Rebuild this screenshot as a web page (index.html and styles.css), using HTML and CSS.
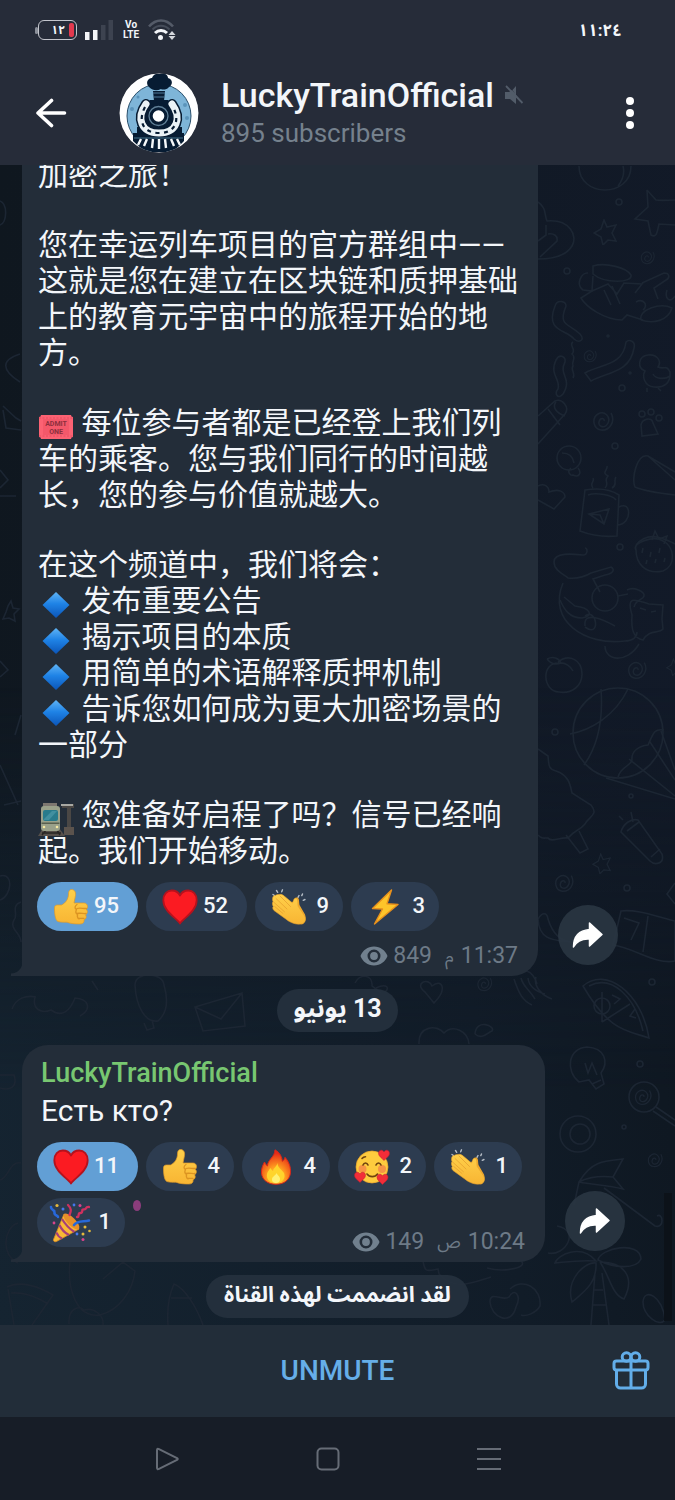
FILE: index.html
```html
<!DOCTYPE html>
<html lang="en">
<head>
<meta charset="utf-8">
<meta name="viewport" content="width=device-width, initial-scale=1">
<title>LuckyTrainOfficial</title>
<link rel="stylesheet" href="styles.css">
</head>
<body>
<svg class="sprite" aria-hidden="true">
  <defs>
    <linearGradient id="blue" x1="0" y1="0" x2="0" y2="1"><stop offset="0" stop-color="#5fb4f6"/><stop offset=".45" stop-color="#1f83e6"/><stop offset="1" stop-color="#0b55b8"/></linearGradient>
    <linearGradient id="skin" x1="0" y1="0" x2="0" y2="1"><stop offset="0" stop-color="#ffd04a"/><stop offset="1" stop-color="#f8b533"/></linearGradient>
    <radialGradient id="flame" cx=".5" cy=".8" r=".7"><stop offset="0" stop-color="#ffd93b"/><stop offset=".45" stop-color="#ff9a1f"/><stop offset="1" stop-color="#e62a17"/></radialGradient>
    <symbol id="e-thumb" viewBox="0 0 36 36">
      <path fill="url(#skin)" stroke="#e09a26" stroke-width=".7" d="M1.5 19c0-2 1-3 3-3h4c4-2 7-6 7-11 0-3 1-4.500 3-4.500 3 0 4.500 2.500 4 6l-1.500 7.500h10c2 0 3.500 1.500 3.500 3.500 0 1.500-.5 2.300-1.400 2.900 1 .6 1.500 1.600 1.200 3-.2 1.200-.9 2-1.800 2.400.6.7.9 1.600.6 2.800-.3 1.200-1.100 1.900-2.200 2.200.3.700.3 1.400 0 2-.6 1.500-1.800 2.200-4 2.200-5 0-9-.3-13-1.800-3 0-6 .3-9-.7C2 31 1.500 24 1.500 19z"/>
      <path fill="none" stroke="#dc9422" stroke-width="1.300" stroke-linecap="round" d="M24 19.500c3-1 6 .2 9.500 0M24 24.500c3-.7 6 .3 9 0M25 29.300c2 0 4 .3 6 0M24 15.500c-2.500 1.500-2.500 4-.5 5-1 2-.7 4 1 5-.5 2 0 3.600 1.500 4.500"/>
    </symbol>
    <symbol id="e-heart" viewBox="0 0 36 36"><path fill="#fb1b22" stroke="#b5121d" stroke-width="1.800" stroke-linejoin="round" d="M18 34.500C15 29.500 1.300 22.500 1.300 11.200 1.300 5.500 5 1.500 9.800 1.500c3.700 0 6.700 2 8.200 5 1.500-3 4.500-5 8.200-5 4.800 0 8.500 4 8.500 9.700C34.700 22.500 21 29.500 18 34.500z"/></symbol>
    <symbol id="e-clap" viewBox="0 0 36 36">
      <g fill="none" stroke="#b5bcc5" stroke-width="1.400" stroke-linecap="round"><path d="M2 5.500l1.500 1M5.500 1.500l1.200 1.800M11.500.8l-.8 2M28 6.500l-1 1.800M31.500 5l-.7 1.600M34 10.500l-1.800.8"/></g>
      <path fill="#f0a92c" d="M18 15l5-3c1-3 1.500-4 3.200-3.500 2.300.6 1.700 4.500 2.300 7.500l5.500 9.500c1 2 .5 8-2 9.500-4 1.500-11-3-14-7z"/>
      <path fill="url(#skin)" stroke="#e4a02c" stroke-width=".6" d="M2 12.500C1 10.500 1.500 6.500 4 6.500c1 0 1.500-1.500 4-1 2-.5 3.500 0 5.500 1.800L21.500 14c1.200-2 1-5 3.200-4.800 3 .4 1.600 5 2.600 8.300l6 9c2 3 1.500 6.500-1.500 8-6 2-13-1-17-4.500L3 21.500c-1.500-1.500-1.500-3.500-.7-4C1.500 16.500 1 14 2 12.500z"/>
      <path fill="none" stroke="#e9a531" stroke-width=".9" stroke-linecap="round" d="M5 9.500l11 10.500M9 7l10.500 10.500M3.700 17.500L12 24.500M2.500 13l11 9.800"/>
    </symbol>
    <symbol id="e-bolt" viewBox="0 0 36 36"><path fill="#fdc52a" stroke="#e8901c" stroke-width="1.400" stroke-linejoin="round" d="M24.500 1L5.500 19.500l10 .5-8 15L31 15.500l-11-.8z"/></symbol>
    <symbol id="e-fire" viewBox="0 0 36 36">
      <path fill="url(#flame)" stroke="#d9261a" stroke-width="1" d="M17 .8c5 3 7 7 7.300 11.500 1.500-.8 2.300-2.300 2.700-4 4 4.500 6 10 5.500 15.500C31.700 31 26 35.300 18 35.300S4 31 3.500 24c-.3-5 1.500-8 3-11 .8 1.500 1.500 3 3 4C9.500 10.500 17 8 17 .8z"/>
      <path fill="#ffd42c" d="M19.500 14c0 5 5 7 6.500 10 2 5.500-1.500 10-8 10s-10-4-9-9c.7-3 2.300-4 3.500-6 .8 1.500 1.500 2.300 2.600 3 0-3 3.500-4 4.400-8z"/><path fill="#fff176" d="M18.500 24c.5 2 3.500 3 3.500 6 0 2.500-1.500 4-4 4s-4.300-1.500-4-4c.3-2.500 3.700-3.500 4.500-6z"/>
    </symbol>
    <path id="mini" fill="#f22d38" stroke="#be1d30" stroke-width=".5" d="M0 5.500C-2 3-5.500 1.500-5.500-1.800-5.500-5-1.500-6 0-3 1.500-6 5.500-5 5.500-1.800 5.500 1.500 2 3 0 5.500z"/>
    <symbol id="e-love" viewBox="0 0 36 36">
      <circle cx="18" cy="18" r="16" fill="#fecb3e" stroke="#eca52c" stroke-width=".7"/>
      <circle cx="8.500" cy="20" r="4" fill="#f79445"/><circle cx="28" cy="20" r="4" fill="#f79445"/>
      <g fill="none" stroke="#70430f" stroke-width="1.600" stroke-linecap="round"><path d="M9 16c1-2.700 4-2.700 5 0M22 16c1-2.700 4-2.700 5 0M13 25c2.500 3.500 8 3.500 10.500 0M8 9.500c1-1.200 2-1.700 3.500-1.800"/></g>
      <use href="#mini" x="30" y="6"/><use href="#mini" x="6" y="28"/><use href="#mini" x="28.500" y="30"/>
    </symbol>
    <symbol id="e-party" viewBox="0 0 42 40">
      <path fill="#f9b935" stroke="#d78a24" stroke-width=".8" d="M4.500 36.500L15 11c5 2 12 9 15 15L7.500 38.500c-2 .8-3.500-.3-3-2z"/>
      <path fill="none" stroke="#a63f7a" stroke-width="2.200" d="M13 16c3 5 7 9.500 12.500 13M10.500 22c2 4.500 5.500 8 9.500 10M7.500 29.500c1 3 3 5 5.500 6"/>
      <ellipse cx="22.500" cy="18.500" rx="4" ry="10.500" transform="rotate(-45 22.500 18.500)" fill="#e88f2a"/>
      <path fill="none" stroke="#2768da" stroke-width="2.600" stroke-linecap="round" d="M2 4c0 4 4 2 3.500 5.500S9 12 9 14M25 22c4-5 9-3 15-4.500"/>
      <path fill="none" stroke="#ce315f" stroke-width="2.300" stroke-linecap="round" d="M19 2c4 4 3 6 1.500 10M28 14c3 .5 0-4 3.500-4s0-4 3.500-3.700S35.500 3.500 40 4"/>
      <g fill="#e6b93b"><circle cx="8" cy="2.500" r="1.600"/><circle cx="36" cy="24" r="1.500"/><circle cx="40.500" cy="28" r="1.300"/><circle cx="34" cy="31" r="1.500"/></g>
      <g fill="#d8438c"><circle cx="31" cy="2.500" r="1.500"/><circle cx="5" cy="20" r="1.400"/><circle cx="34" cy="36.500" r="1.500"/></g><g fill="#4577ed"><circle cx="14" cy="6" r="1.500"/><circle cx="25" cy="2" r="1.400"/><circle cx="28" cy="31" r="1.400"/></g>
    </symbol>
    <symbol id="e-diamond" viewBox="0 0 36 36"><path d="M18 5l13.500 13L18 31 4.500 18z" fill="url(#blue)"/></symbol>
    <symbol id="e-ticket" viewBox="0 0 36 36">
      <path d="M3 6h30q0 2 2 2v20q-2 0-2 2H3q0-2-2-2V8q2 0 2-2z" fill="#fb6273"/><path d="M1 9h34M1 27h34" stroke="#e84c60" stroke-dasharray="2 1.500"/><rect x="5" y="10" width="26" height="16" fill="#f4586a"/>
      <text x="18" y="17" text-anchor="middle" class="ticket-text">ADMIT</text><text x="18" y="25" text-anchor="middle" class="ticket-text">ONE</text>
    </symbol>
    <symbol id="e-station" viewBox="0 0 36 36">
      <path fill="#4a4745" d="M24 3h12v4h-3v20h-4V7h-5z"/><path fill="#a8a8a3" d="M23 3h12v2H23z"/><path fill="#5b534d" d="M26 26h10v8H26z"/><path fill="#57504b" d="M0 35l5-8h16l6 8z"/><path stroke="#292625" stroke-width="1.500" d="M4 34l4-5M22 34l-3-5M4 32h19"/>
      <path fill="#7d7770" d="M5 2h14v4H5z"/><rect x="3" y="5" width="19" height="25" rx="3" fill="#9aa18a"/><rect x="5" y="9" width="15" height="11" rx="2" fill="#287b8c"/><path d="M6 18l8-8h5l-8 9H6z" fill="#4190a0"/><path fill="#59604f" d="M3.500 21.500h18v1.500h-18z"/><circle cx="6" cy="26" r="1.300" fill="#f6e9a2"/><circle cx="19" cy="26" r="1.300" fill="#f6e9a2"/>
    </symbol>
    <symbol id="i-eye" viewBox="0 0 28 20"><path fill="#71808e" fill-rule="evenodd" d="M14 0.500C7.700.5 2.500 4.500.5 10c2 5.500 7.200 9.500 13.500 9.500S25.500 15.500 27.500 10C25.500 4.500 20.300.5 14 .5zm0 16A6.500 6.500 0 1 1 14 3.500a6.500 6.500 0 0 1 0 13zm0-2.600a3.900 3.900 0 1 0 0-7.800 3.900 3.900 0 0 0 0 7.800z"/></symbol>
    <symbol id="i-share" viewBox="0 0 32 28"><path fill="#fff" stroke="#fff" stroke-width="1.500" stroke-linejoin="round" d="M17.500 2L30 13.500 17.500 25v-7C10 17.500 5 19.500 1.500 26 1.500 16 7 9.500 17.500 8.500z"/></symbol>
    <symbol id="spiral" viewBox="0 0 22 22"><path d="M19 3c5 9-2 18-10 17S-.5 8 6 4s13 3 10 9-10 4-9-1 6-4 5-1"/></symbol>
    <symbol id="star" viewBox="0 0 24 26"><path d="M11 1l3 7 9-2-4 8 4 8-8-1-5 5-2-8-7-4 7-4z"/></symbol>
  </defs>
</svg>

<div class="screen">
  <header class="header">
    <div class="status">
      <div class="status-icons">
        <span class="battery"><span>١٢</span><i></i></span>
        <svg class="signal" viewBox="0 0 28 20" aria-hidden="true"><path fill="#f3f5f8" d="M0 12h4.500v8H0zM8 10h4.500v10H8z"/><path fill="#3d4350" d="M16 5h4.500v15H16zM23.500 0H28v20h-4.500z"/></svg>
        <span class="volte"><span>Vo</span><span>LTE</span></span>
        <svg class="wifi" viewBox="0 0 28 22" fill="none" aria-hidden="true"><path stroke="#545b68" stroke-width="2.600" d="M1 7.500C8-.5 18-.5 25 7.500"/><path stroke="#454c59" stroke-width="2" d="M4.500 10.500c5-5 12-5 17 0"/><path stroke="#f3f5f8" stroke-width="3" d="M7 14c3.500-3.500 8.500-3.500 12 0"/><circle cx="12.500" cy="18.500" r="2.500" fill="#f3f5f8"/><path fill="#d4d7dc" d="M24 12l3.500 4h-7zM24 21l3.500-4h-7z"/></svg>
      </div>
      <time class="clock">١١:٢٤</time>
    </div>
    <div class="toolbar">
      <button class="icon-btn back" aria-label="Back"><svg viewBox="0 0 32 30" fill="none" stroke="#fff" stroke-width="3.600" stroke-linecap="round" stroke-linejoin="round"><path d="M16.500 2.500L3 15l13.500 12.500M3 15h26.500"/></svg></button>
      <svg class="avatar" viewBox="0 0 80 80" role="img" aria-label="LuckyTrainOfficial">
        <clipPath id="round"><circle cx="40" cy="40" r="39.500"/></clipPath>
        <g clip-path="url(#round)"><circle cx="40" cy="40" r="40" fill="#fff"/><circle cx="40" cy="43" r="32" fill="#7eb5d8" stroke="#2a4f6b"/>
        <g fill="#5b94bb"><circle cx="13" cy="36" r="2"/><circle cx="66" cy="32" r="2"/><circle cx="19" cy="24" r="1.500"/><circle cx="68" cy="45" r="2"/></g>
        <path fill="#071c33" d="M30 14c-4-4-1-9 3-9 1-4 5-5 8-4 4-2 8 1 8 4 5 1 5 7 1 9-2 3-7 3-8 2-4 2-8 2-12-2zM34 18h12l-1 10H35z"/><path stroke="#4e7898" stroke-width="1.200" d="M34 20h12M35 24h10"/>
        <path fill="#071c33" d="M24 34l7-7h18l8 7v20h6v6h2v8L54 79H26L14 68v-8h4v-6h6z"/>
        <path fill="none" stroke="#071c33" stroke-width="10" stroke-linecap="round" d="M27 31c-10 14-5 29 13 29s23-15 13-29"/>
        <path fill="none" stroke="#eaf2f6" stroke-width="7" stroke-linecap="round" d="M27 31c-10 14-5 29 13 29s23-15 13-29"/>
        <path fill="none" stroke="#071c33" stroke-width="2.200" stroke-dasharray="4 4.500" d="M26 34c-7 13-3 26 14 26s21-13 14-26"/>
        <circle cx="39.500" cy="43" r="13" fill="#071c33"/><circle cx="39.500" cy="43" r="9.500" fill="none" stroke="#5f7f96" stroke-width="1.300"/><circle cx="39.500" cy="43" r="5.800" fill="#fff"/>
        <path stroke="#31566f" stroke-width="1.500" d="M15 65h49"/><path stroke="#f5f8fa" stroke-width="2.400" d="M40 66v10M34 66l-1 9M28 66l-3 7M22 66l-3 6M46 66l1 9M52 66l3 7M58 66l3 6"/></g>
      </svg>
      <div class="title-block">
        <h1 class="title">LuckyTrainOfficial <svg class="muted" viewBox="0 0 20 20" aria-label="Muted"><path fill="#525c69" d="M1 7h4l3-2 10 12v1L12 12v7L6 14H1zM12 1v9L8.500 5z"/><path stroke="#525c69" stroke-width="1.800" d="M2 1l16.500 17"/></svg></h1>
        <p class="subtitle">895 subscribers</p>
      </div>
      <button class="icon-btn more" aria-label="More options"><svg viewBox="0 0 8 32" fill="#fff"><circle cx="4" cy="4" r="4"/><circle cx="4" cy="16" r="4"/><circle cx="4" cy="28" r="4"/></svg></button>
    </div>
  </header>

  <main class="chat">
    <svg class="wallpaper" viewBox="0 165 675 1160" preserveAspectRatio="xMidYMid slice" fill="none" aria-hidden="true">
      <path d="M579 166c0 32 52 32 52 0M623 166c2 8-1 15-5 20M538 202c9 6 6 13 9 19 23-2 31 15 25 25s-20 13-34 13M546 225v10l-8 6M548 234c6-1 10 2 9 7l-17 16M647 190l9 10c6 1 12 0 19 0M647 190l1 17-13 12 13 2 3 14c5 3 6-1 8-11l16 1"/>
      <path d="M593 266c13-4 34 2 38 9 2 8-26 9-38-1zM593 276l-1 15-9-1c-8-6-1-18 5-17M592 291l-11 7c5 9 24 22 41 22l5-5 16 5M592 291l16-7 9 10 7-11 18 1-7 9M642 283l22-10c6 0 6 5 2 7l-12 8 4 11M604 290l7 15M612 286l8 18M641 320c-3-10 19-18 31-12-4 13-19 16-31 12M636 302c7-4 13 3 7 8M667 290c-3 10 4 13 8 6"/>
      <path d="M555 306c2-7 11-5 11 0-8 20 2 17 14 28 6 7-2 9-6 5-8-10-29-7-19-33zM556 360c4-7 10-3 9 2-7 13 8 16-2 32-5 6-9 0-5-5 3-10-9-14-2-29zM626 342c3-3 10-1 8 6-4 25-27 24-43 33l-6-8c16-9 38-7 41-31zM573 342c-5 3 4 7-1 12 5 4-1 7 1 12-3 4 3 7 0 12"/>
      <path d="M645 371c-8-3-7-15 3-16 9-1 14 6 10 12 7 3 8-3 12 5 1 12-7 16-16 15-10-1-12-11-9-16zM647 388v4M658 388l3 3M653 374c3 6 13 5 17 2M538 416l17-15c7-3 15 6 10 13l-27 30M548 409l12 16M556 402c-4 5 0 11 9 14M641 425c1-6 11-9 12-2l5 11-16 2z"/><circle cx="651" cy="412" r="3"/><circle cx="642" cy="414" r="3"/><circle cx="659" cy="418" r="3"/><circle cx="569" cy="458" r="12"/><path d="M562 453c8 0 11 4 12 10M571 468c-5 4 0 8 2 7 6 3 9-2 5-7M538 486c6-3 11 0 11 6 10-4 16 0 16 5l-11 12-16-9"/>
      <path d="M675 472l-27-16c-11-3-17 23-13 31 7 3 22 6 40 8M648 456l27 24M585 490c12-2 25-1 34 5l-2 41c-11 1-24 0-37-5zM619 507c13-7 13 17-1 18M588 495c8-3 25 0 28 5M593 488c-4-5 2-6 0-10M605 488c5-5-2-7 3-12-7-3 0-6-1-10M612 488c6-3 1-7 4-11M589 514l20-5-5 15zM589 514l11 1 4 9"/>
      <path d="M585 548c3 0 3 7-2 7-10-1-29-3-29 7 0 9 11 13 14 16 11 1 18-2 23-5l20-6c5 3 1 7-6 8l-12 4 7 13M563 583c-16 38 22 63 62 58 8 0 12-4 12-9M560 600c4 9 9 18 22 18 12-2 9-10-7-12l-11-9M585 626c-2-16 19-6 30 0M585 627c16 12 12-20 0-11M632 615c-7-22 6-14 17-11l14 1-1 14 1 10c-4 5-14 0-20 11-10-2-12-11-11-25zM627 590c7-4 18 2 17 6s-8 3-10 11M605 646c0 15 22 18 34-2M640 608l6 2M651 612l5-1M618 596l10-2"/><circle cx="605" cy="598" r="13"/>
      <path d="M558 662c11-9 24-2 24 12 0 12-10 20-23 18-17-1-18-30 0-29M547 659c6-3 12-1 14 4-5 2-10 1-14-4M558 663c8-1 13 4 15 8M636 550c-5-7 18-15 27-9 11 5 14 24 0 30-18 4-27-8-27-21z"/><circle cx="618" cy="733" r="45"/><path d="M601 689c2 27-2 55-17 76M570 734c21-4 45-18 58-45M606 778l69 21M675 796l-46-37M675 780l-25-38M675 770l-14-39M618 777c3-11 12-10 14-17-1-9 7-14 16-15 5-10 5-17 16-15"/>
      <path d="M538 749l10 7c1 9 0 13 8 15 12 4 14 12 16 22l19 12c8 10-2 11-6 19-6 7-9 5-17 14-8-1-17 5-20 0-5 0-6 1-10-3M566 835l14 18 8-4-9-18M621 832c2-8 10-14 17-12l24 34c3 11-8 11-12 7zM627 831l12-9M651 857l9-8M631 812l2 10M619 816l4 4M675 883l-8 11 8 10M538 919c4-7 9-7 10 0 5 16 13 22 23 23-14-2-32 0-33-23M621 911c14-2 31 4 54 10v40c-20 4-40-13-62-16zM648 916l-5 36M624 918l15 5-8 17"/>
      <path d="M583 986c23-20 59 7 66 52-23-8-39-6-66-52zM589 986c23-12 46 11 54 45M602 992v30M602 1022l28-18M612 995l8 4-6 5M635 1009l-5 7 6 2"/><circle cx="602" cy="1006" r="8"/>
      <path d="M425 992c-12-9 4-15 7-6 10-8 16 3 2 17zM513 974c8-8 20-4 24 10M514 979c5 15 9 22 18 26M521 978c2 9 9 12 14 21M528 978c1 10 10 14 17 16M536 977c-3 10 7 19 16 22M419 1044c-1-18 18-20 25-11 9-9 24-2 25 11M475 1034c1-16 21-8 17-3-5 2-10 9-17 3"/>
      <path d="M579 1082c-14-11-11-34 8-35 18 1 22 15 14 26l3 11-8 5-7-9zM592 1084l9-4M585 1063l3 10 4-10 5 12"/><circle cx="644" cy="1097" r="15"/><path d="M656 1107l19 13M653 1111l22 15"/><circle cx="578" cy="1134" r="18"/><circle cx="580" cy="1134" r="10"/>
      <path d="M579 1182c12-20 23-21 44-23l-10 18 10 12c-16-4-29-4-44-7zM579 1182c5-3 17-7 34-5M604 1188l51 38c10 3 8-14 2-10M579 1182l-5 23M557 1226c24 4 8 31-9 27M596 1261c-15-18-39-6-41 2 11-1 22-3 41-2zM598 1260c2-12 42-20 43-1-5 11-28 9-43 1zM596 1263c-10-2-31 16-24 39 12-10 25-19 24-39zM600 1262c23 0 36 14 24 37-12-4-14-22-24-37M595 1273l-4 52M602 1273l7 52M594 1290h9M593 1305h13"/>
      <path d="M490 1302c0-12 13 0 19-5 5-10 13-2 7 10-5 20-25 10-26-5zM510 1289c13-12 32-1 30 17-4 7-14 11-19 9M643 1302c1-15 20-6 22 18-6 8-22-5-22-18M423 1261c2 12 4 10 15 8l1 5c16 18 35 8 52 3M487 1268c18 5 42-1 34-7M7 1287c13-7 33 0 46 8l-21 30M8 1289l6 36M11 1293c15-1 30 6 37 11M70 1261c-3 28 6 57 30 54 20-5 33-25 35-44l-12-9-20 17M69 1324c-1-15 9-19 15-14 11-3 20 6 19 15M168 1325c-1-14 0-28 6-41 11 4 23 24 29 41M171 1298h21"/>
      <path d="M12 1009c4-11 14-14 24-12M35 997c-3 12 6 17 16 13 11 8 19 1 24-12 14 1 17 11 5 18M135 985c0-14 28-13 29 0 5 17 2 29-6 36-13 2-22-15-23-36zM144 1023l3 7 7-2-2-8M195 1007l47-14 3 33-42 5zM195 1007l26 12 21-26M92 981l6 9M355 983c4-10 18-9 17 3l9 7M376 988c11-5 14 0 9 4"/>
      <path d="M0 201c8 3 7 22 0 24M20 354c-19 6-19 16 0 28M3 406l13 12 5 3M3 410l3 18 15 2M0 470l8 10-8 8M0 496h16M8 606l3-5 2 7 6 1-5 5 1 7-6-3-6 1 3-7zM0 661l8 9-8 7M21 715l-6 20M0 765l18 40M4 805l17-4M0 876c14-4 12 20 0 24M21 902c-11 4-2 13-7 18-5 9 7 13 7 22M0 1075h14c4 12-4 16-14 13M21 1163c-11-3-13 16-21 17M18 1223c-14 4-18 32 0 40"/>
      <use href="#star" x="593" y="219" width="24" height="26"/><use href="#star" x="592" y="853" width="19" height="21"/><use href="#star" x="666" y="658" width="16" height="18"/>
      <use href="#spiral" x="640" y="250" width="15" height="15"/><use href="#spiral" x="583" y="349" width="14" height="14"/><use href="#spiral" x="592" y="410" width="22" height="22"/><use href="#spiral" x="626" y="660" width="22" height="20"/><use href="#spiral" x="554" y="873" width="20" height="20"/><use href="#spiral" x="475" y="976" width="19" height="16"/><use href="#spiral" x="647" y="1152" width="16" height="16"/><use href="#spiral" x="634" y="1088" width="18" height="18"/>
      <g><circle cx="619" cy="202" r="3"/><circle cx="567" cy="271" r="3"/><circle cx="622" cy="388" r="3"/><circle cx="615" cy="446" r="3"/><circle cx="555" cy="732" r="3"/><circle cx="631" cy="796" r="2"/><circle cx="627" cy="888" r="3"/><circle cx="640" cy="1064" r="3"/><circle cx="652" cy="982" r="3"/><circle cx="624" cy="1127" r="2"/><circle cx="620" cy="547" r="3"/><circle cx="608" cy="336" r="1"/><circle cx="630" cy="373" r="1"/></g>
      <path d="M642 553l1-5M650 557l1-5M659 553l1-5M646 564l1-4M655 563l1-4M664 562l1-4M636 545c10-12 22-10 39-1M652 540l3-9 4 8 8-3-3 8"/>
    </svg>

    <section class="row">
      <article class="bubble wide">
        <div class="message" lang="zh-CN">
          <p>加密之旅！</p>
          <p>您在幸运列车项目的官方群组中——这就是您在建立在区块链和质押基础上的教育元宇宙中的旅程开始的地方。</p>
          <p><svg class="emoji"><use href="#e-ticket"/></svg> 每位参与者都是已经登上我们列车的乘客。您与我们同行的时间越长，您的参与价值就越大。</p>
          <p>在这个频道中，我们将会：<br>
          <svg class="emoji"><use href="#e-diamond"/></svg> 发布重要公告<br>
          <svg class="emoji"><use href="#e-diamond"/></svg> 揭示项目的本质<br>
          <svg class="emoji"><use href="#e-diamond"/></svg> 用简单的术语解释质押机制<br>
          <svg class="emoji"><use href="#e-diamond"/></svg> 告诉您如何成为更大加密场景的一部分</p>
          <p><svg class="emoji"><use href="#e-station"/></svg> 您准备好启程了吗？信号已经响起。我们开始移动。</p>
        </div>
        <div class="reactions">
          <button class="pill double chosen"><svg><use href="#e-thumb"/></svg>95</button>
          <button class="pill double"><svg><use href="#e-heart"/></svg>52</button>
          <button class="pill"><svg><use href="#e-clap"/></svg>9</button>
          <button class="pill"><svg><use href="#e-bolt"/></svg>3</button>
        </div>
        <div class="meta"><svg class="eye" aria-label="Views"><use href="#i-eye"/></svg><span class="views">849</span><span class="period">م</span><time>11:37</time></div>
      </article>
      <button class="share" aria-label="Share"><svg><use href="#i-share"/></svg></button>
    </section>

    <div class="chip date" dir="rtl" lang="ar">13 يونيو</div>

    <section class="row">
      <article class="bubble short">
        <h2 class="author">LuckyTrainOfficial</h2>
        <p class="text" lang="ru">Есть кто?</p>
        <div class="foot">
          <div class="reactions">
            <button class="pill double chosen"><svg><use href="#e-heart"/></svg>11</button>
            <button class="pill"><svg><use href="#e-thumb"/></svg>4</button>
            <button class="pill"><svg><use href="#e-fire"/></svg>4</button>
            <button class="pill"><svg><use href="#e-love"/></svg>2</button>
            <button class="pill"><svg><use href="#e-clap"/></svg>1</button>
            <button class="pill party"><svg><use href="#e-party"/></svg>1</button>
            <i class="confetti"></i>
          </div>
          <div class="meta"><svg class="eye" aria-label="Views"><use href="#i-eye"/></svg><span class="views">149</span><span class="period">ص</span><time>10:24</time></div>
        </div>
      </article>
      <button class="share" aria-label="Share"><svg><use href="#i-share"/></svg></button>
    </section>

    <div class="chip" dir="rtl" lang="ar">لقد انضممت لهذه القناة</div>
    <i class="scroll-thumb"></i>
  </main>

  <footer class="actions">
    <button class="unmute">UNMUTE</button>
    <button class="icon-btn gift" aria-label="Send a gift"><svg viewBox="0 0 38 40" fill="none" stroke="#62ade9" stroke-width="3"><rect x="2" y="10" width="34" height="9" rx="2.500"/><path d="M4.500 19v14a4 4 0 0 0 4 4h21a4 4 0 0 0 4-4V19M19 10v27"/><circle cx="14.500" cy="6" r="4.300"/><circle cx="23.500" cy="6" r="4.300"/></svg></button>
  </footer>
  <nav class="system-nav" aria-label="System">
    <button class="icon-btn" aria-label="Back"><svg viewBox="0 0 24 24"><path d="M2 3.200v17.600q0 2 2 1L22 13q1.500-1 0-2L4 2.200q-2-1-2 1z"/></svg></button>
    <button class="icon-btn" aria-label="Home"><svg viewBox="0 0 24 24"><rect x="1.500" y="1.500" width="21" height="21" rx="4"/></svg></button>
    <button class="icon-btn" aria-label="Recents"><svg viewBox="0 0 24 24"><path d="M0 2h24M0 12h24M0 22h24"/></svg></button>
  </nav>
</div>
</body>
</html>
```

FILE: styles.css
```css
* { box-sizing: border-box; }
body, h1, h2, p { margin: 0; }
body {
  background: #171d27;
  color: #f3f6fa;
  font-family: Roboto, "Noto Sans CJK SC", "Noto Sans Arabic", "DejaVu Sans", sans-serif;
}
button { margin: 0; padding: 0; border: 0; background: none; color: inherit; font: inherit; }
svg { display: block; }
.sprite { position: absolute; width: 0; height: 0; }
.ticket-text { font-size: 7px; font-weight: 700; fill: #8c2f3d; }

.screen { display: flex; flex-direction: column; height: 100vh; }

/* Header */
.header { flex: none; background: #262c39; }
.status { display: flex; align-items: center; justify-content: space-between; height: 60px; padding: 0 53px 0 38px; }
.status-icons { display: flex; align-items: center; }
.battery {
  position: relative;
  display: flex; align-items: center; justify-content: flex-end; gap: 4px;
  width: 39px; height: 20px; padding: 0 2px;
  border: 1px solid #c3c6cd; border-radius: 6px;
  font-size: 12px; font-weight: 700; line-height: 16px;
}
.battery::before { content: ""; position: absolute; left: -4px; top: 6px; width: 3px; height: 7px; border-radius: 2px; background: #8a8f99; }
.battery i { width: 5px; height: 14px; border-radius: 2px; background: #e3394e; }
.signal { width: 28px; height: 20px; margin-left: 8px; }
.volte { display: flex; flex-direction: column; align-items: center; margin-left: 10px; font-size: 10px; font-weight: 700; line-height: 10px; }
.wifi { width: 28px; height: 22px; margin-left: 9px; }
.clock { font-size: 17px; font-weight: 700; line-height: 24px; }

.toolbar { display: flex; align-items: center; height: 105px; padding: 0 24px 0 35px; }
.icon-btn { display: grid; place-items: center; flex: none; }
.back svg { width: 32px; height: 30px; }
.avatar { flex: none; width: 80px; height: 80px; margin-left: 52px; }
.title-block { flex: 1; min-width: 0; margin-left: 22px; }
.title { display: flex; align-items: center; gap: 10px; font-size: 34px; font-weight: 500; line-height: 40px; white-space: nowrap; }
.muted { width: 20px; height: 20px; }
.subtitle { color: #75818d; font-size: 26px; line-height: 36px; }
.more { width: 42px; height: 42px; }
.more svg { width: 8px; height: 32px; }

/* Conversation */
.chat {
  position: relative;
  display: flex; flex-direction: column; justify-content: flex-end; gap: 13px;
  flex: 1; min-height: 0; overflow: hidden;
  padding: 0 22px 7px;
  background: linear-gradient(95deg, #0f171f 0%, #111925 60%, #121a29 100%);
}
.chat::before { content: ""; position: absolute; inset: 0; background: linear-gradient(80deg, #152431 0%, #111c28 60%, #0d141c 100%); mask-image: linear-gradient(transparent 45%, #000 80%); }
.wallpaper { position: absolute; inset: 0; width: 100%; height: 100%; stroke: #1c2633; stroke-width: 1.6; }
.row { position: relative; display: flex; align-items: flex-end; flex: none; gap: 20px; }
.bubble { position: relative; flex: 1; padding: 0 15px 6px; background: #232d39; border-radius: 26px 26px 26px 0; }
.bubble::before {
  content: ""; position: absolute; left: -11px; bottom: 0; width: 12px; height: 20px;
  background: radial-gradient(circle at 0 0, transparent 11px, #232d39 12px) bottom left / 12px 14px no-repeat;
}
.wide { max-width: 516px; border-radius: 0 0 26px; }
.short { max-width: 523px; padding-top: 11px; }
.message { display: flex; flex-direction: column; gap: 34px; font-size: 30px; line-height: 36px; }
.message p { margin: 0 1px; }
.emoji { display: inline-block; width: 36px; height: 36px; vertical-align: -4px; margin: -8px 0; }
.wide .reactions { margin: 13px 0 11px; }
.reactions { display: flex; flex-wrap: wrap; gap: 7px 8px; }
.pill {
  display: flex; align-items: center; justify-content: space-between; gap: 5px;
  min-width: 88px; height: 49px; padding: 0 14px 2px 16px;
  border-radius: 25px; background: #2d3c50;
  font-size: 22px; font-weight: 500; line-height: 28px;
}
.pill svg { width: 36px; height: 36px; margin-top: 3px; }
.pill.double { padding-right: 19px; }
.pill.chosen { background: #629fd5; }
.pill.party { padding-left: 12px; }
.pill.party svg { width: 42px; height: 40px; }
.confetti { width: 8px; height: 11px; margin-top: 2px; border-radius: 50%; background: #8b3d7c; }
.meta { display: flex; align-items: center; justify-content: flex-end; padding-right: 5px; color: #6d7a87; font-size: 23px; line-height: 28px; }
.eye { width: 28px; height: 20px; margin-right: 5px; }
.views { margin-right: 13px; }
.period { font-size: 18px; }
.meta time { margin-left: 7px; }
.author { margin-left: 4px; color: #78c771; font-size: 27px; font-weight: 500; line-height: 34px; }
.text { margin-left: 4px; font-size: 30px; line-height: 42px; }
.foot { display: grid; padding-top: 10px; }
.foot .reactions, .foot .meta { grid-area: 1 / 1; }
.foot .reactions { margin-bottom: 9px; }
.foot .meta { align-self: end; justify-self: end; }
.share { display: grid; place-items: center; flex: none; width: 60px; height: 60px; margin-bottom: 11px; border-radius: 50%; background: rgba(42, 54, 67, .9); }
.share svg { width: 32px; height: 28px; }
.chip {
  position: relative; align-self: center; flex: none;
  height: 43px; padding: 0 18px; border-radius: 22px;
  background: rgba(37, 49, 62, .92);
  font-size: 22px; font-weight: 700; line-height: 40px;
}
.date { padding: 0 16px; font-size: 25px; }
.scroll-thumb { position: absolute; right: 3px; bottom: 4px; width: 8px; height: 128px; background: #0c1219; }

/* Bottom bars */
.actions { display: grid; grid-template-columns: 1fr auto 1fr; align-items: center; flex: none; height: 92px; padding: 0 24px; background: #222d39; }
.unmute { grid-column: 2; color: #66aee8; font-size: 28px; font-weight: 500; line-height: 40px; }
.gift { justify-self: end; }
.gift svg { width: 40px; height: 40px; }
.system-nav { display: flex; align-items: center; justify-content: center; gap: 137px; flex: none; height: 83px; padding-right: 19px; background: #171d27; }
.system-nav svg { width: 24px; height: 24px; fill: none; stroke: #666c76; stroke-width: 2; }
```
